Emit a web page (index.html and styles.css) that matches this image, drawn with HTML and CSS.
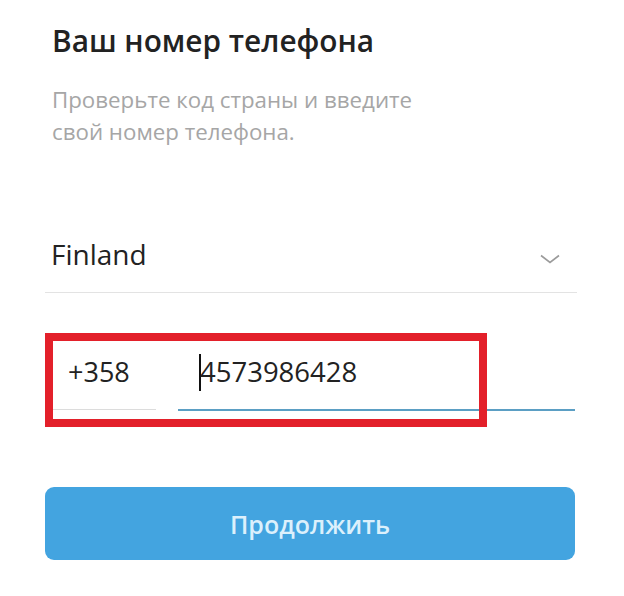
FILE: index.html
```html
<!DOCTYPE html>
<html lang="ru">
<head>
<meta charset="utf-8">
<title>Ваш номер телефона</title>
<link rel="stylesheet" href="styles.css">
</head>
<body>
<div class="auth">
  <h1 class="title">Ваш номер телефона</h1>
  <p class="subtitle">Проверьте код страны и введите<br>свой номер телефона.</p>

  <div class="country">
    <span class="country-name">Finland</span>
    <svg class="chevron" width="20" height="10" viewBox="0 0 20 10"><polyline points="1,1.5 10,8.5 19,1.5" fill="none" stroke="#9b9b9b" stroke-width="1.6"/></svg>
  </div>

  <div class="phone">
    <div class="code">+358</div>
    <div class="number"><span class="caret"></span>4573986428</div>
    <div class="highlight"></div>
  </div>

  <button class="next">Продолжить</button>
</div>
</body>
</html>
```

FILE: styles.css
```css
html, body {
  margin: 0;
  padding: 0;
  background: #ffffff;
}

body {
  font-family: "Open Sans", "Noto Sans", sans-serif;
  color: #222222;
}

.auth {
  width: 532px;
  margin-left: 45px;
  padding-top: 22px;
  display: flex;
  flex-direction: column;
}

.title {
  margin: 0;
  padding-left: 7px;
  font-size: 29.8px;
  line-height: 38px;
  font-weight: 600;
  color: #222222;
}

.subtitle {
  margin: 24px 0 0;
  padding-left: 7px;
  font-size: 22.3px;
  line-height: 32px;
  color: #a6a6a6;
}

.country {
  margin-top: 86px;
  padding: 0 17px 18px 6px;
  display: flex;
  align-items: center;
  justify-content: space-between;
  border-bottom: 1px solid #e3e3e3;
}

.country-name {
  font-size: 28px;
  line-height: 40px;
  color: #222222;
}

.chevron {
  margin-top: 10px;
}

.phone {
  position: relative;
  margin-top: 40px;
  display: flex;
  align-items: flex-end;
}

.code {
  width: 111px;
  box-sizing: border-box;
  padding: 19px 0 17px 23px;
  font-size: 27px;
  line-height: 40px;
  color: #222222;
  border-bottom: 1px solid #dcdcdc;
  margin-bottom: 1px;
}

.number {
  flex: 1;
  margin-left: 22px;
  margin-right: 2px;
  padding: 19px 0 17px 21px;
  font-size: 27.5px;
  line-height: 40px;
  color: #222222;
  border-bottom: 2px solid #5b9fc4;
  display: flex;
  align-items: center;
}

.caret {
  display: inline-block;
  width: 2px;
  height: 37px;
  background: #111111;
  margin-right: -1px;
}

.highlight {
  position: absolute;
  left: 0;
  top: 0;
  width: 442px;
  height: 94px;
  box-sizing: border-box;
  border: 8px solid #e3202a;
  pointer-events: none;
}

.next {
  margin-top: 76px;
  width: 530px;
  height: 73px;
  border: none;
  border-radius: 9px;
  background: #43a4e0;
  color: #dcf0fc;
  font-family: "Open Sans", "Noto Sans", sans-serif;
  font-size: 25px;
  font-weight: 600;
  padding: 0;
}
```
